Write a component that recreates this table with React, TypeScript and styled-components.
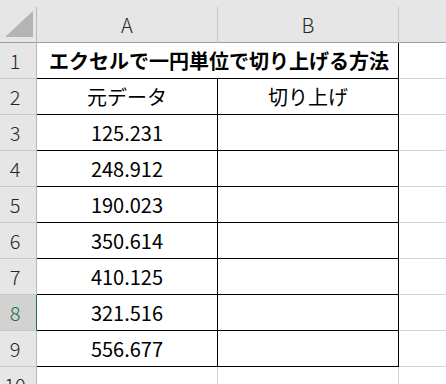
import React from "react";
import styled, { createGlobalStyle } from "styled-components";

const GlobalStyle = createGlobalStyle`
  html, body {
    margin: 0;
    padding: 0;
    background: #ffffff;
    overflow: hidden;
  }
  body {
    font-family: "Noto Sans CJK JP", "Noto Sans", sans-serif;
  }
`;

const Sheet = styled("div")`
  width: 446px;
  height: 384px;
  overflow: hidden;
  background: #ffffff;
`;

const TopStrip = styled("div")`
  height: 7px;
  background: #e6e6e6;
`;

const Grid = styled("div")`
  display: grid;
  grid-template-columns: 37px 181px 181px 1fr;
  grid-auto-rows: 36px;
`;

const Corner = styled("div")`
  position: relative;
  background: #e6e6e6;
  border-right: 1px solid #b8b8b8;
  border-bottom: 1px solid #9e9e9e;
`;

const CornerMark = styled("div")`
  position: absolute;
  left: 5px;
  top: 4px;
  width: 28px;
  height: 26px;
  background: #b4b4b4;
  clip-path: polygon(100% 0, 100% 100%, 0 100%);
`;

const ColHead = styled("div")`
  display: flex;
  align-items: center;
  justify-content: center;
  background: #e6e6e6;
  color: #262626;
  font-size: 20px;
  font-weight: 300;
  border-right: 1px solid #c6c6c6;
  border-bottom: 1px solid #9e9e9e;
  white-space: nowrap;
  overflow: hidden;
`;

const ColHeadC = styled(ColHead)`
  justify-content: flex-start;
  padding-left: 46px;
  border-right: none;
`;

const RowHead = styled("div")<{ $active?: boolean }>`
  display: flex;
  align-items: center;
  justify-content: center;
  padding-right: 6px;
  background: ${(p) => (p.$active ? "#d2d2d2" : "#e6e6e6")};
  color: ${(p) => (p.$active ? "#217346" : "#262626")};
  font-size: 20px;
  font-weight: 300;
  border-right: 1px solid ${(p) => (p.$active ? "#217346" : "#b8b8b8")};
  border-bottom: 1px solid #c6c6c6;
`;

const Cell = styled("div")<{ $boxed?: boolean }>`
  display: flex;
  align-items: center;
  justify-content: center;
  font-size: 20px;
  color: #000000;
  white-space: nowrap;
  border-right: 1px solid ${(p) => (p.$boxed ? "#000000" : "#d4d4d4")};
  border-bottom: 1px solid ${(p) => (p.$boxed ? "#000000" : "#d4d4d4")};
`;

const TitleCell = styled(Cell)`
  grid-column: span 2;
  justify-content: flex-start;
  padding-left: 12px;
  font-weight: 700;
  letter-spacing: 0;
`;

const EmptyCell = styled(Cell)`
  border-right: none;
`;

const values = [
  "125.231",
  "248.912",
  "190.023",
  "350.614",
  "410.125",
  "321.516",
  "556.677",
];

const App = () => {
  return (
    <Sheet>
      <GlobalStyle />
      <TopStrip />
      <Grid>
        <Corner>
          <CornerMark />
        </Corner>
        <ColHead>A</ColHead>
        <ColHead>B</ColHead>
        <ColHeadC>C</ColHeadC>

        <RowHead>1</RowHead>
        <TitleCell $boxed>エクセルで一円単位で切り上げる方法</TitleCell>
        <EmptyCell />

        <RowHead>2</RowHead>
        <Cell $boxed>元データ</Cell>
        <Cell $boxed>切り上げ</Cell>
        <EmptyCell />

        {values.map((v, i) => (
          <React.Fragment key={v}>
            <RowHead $active={i + 3 === 8}>{i + 3}</RowHead>
            <Cell $boxed>{v}</Cell>
            <Cell $boxed />
            <EmptyCell />
          </React.Fragment>
        ))}

        <RowHead>10</RowHead>
        <Cell />
        <Cell />
        <EmptyCell />
      </Grid>
    </Sheet>
  );
};

export default App;
